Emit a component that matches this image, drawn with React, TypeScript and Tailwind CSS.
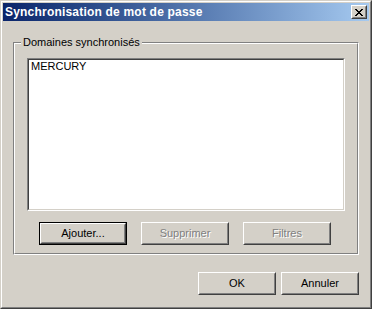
import React from 'react';

const font = "font-['Tahoma','Liberation_Sans',sans-serif]";

// classic 3D push button
const Btn = ({ label, w, disabled, focus }: { label: string; w: string; disabled?: boolean; focus?: boolean }) => {
  const face = (
    <div className="h-full border border-t-white border-l-white border-r-[#404040] border-b-[#404040]">
      <div className="h-full flex items-center justify-center border border-t-[#D4D0C8] border-l-[#D4D0C8] border-r-[#808080] border-b-[#808080]">
        <span
          className={disabled ? 'text-[#808080] [text-shadow:1px_1px_0_#ffffff]' : 'text-black'}
        >
          {label}
        </span>
      </div>
    </div>
  );
  return (
    <div className={`${w} h-[23px] ${focus ? 'border border-black' : ''}`}>
      {face}
    </div>
  );
};

const App = () => {
  return (
    <div className={`w-[372px] h-[309px] bg-[#D4D0C8] text-[11px] leading-none ${font}`}>
      <div className="h-full border border-t-[#D4D0C8] border-l-[#D4D0C8] border-r-[#404040] border-b-[#404040]">
        <div className="h-full flex flex-col p-[1px] border border-t-white border-l-white border-r-[#808080] border-b-[#808080]">
          {/* title bar */}
          <div className="h-[18px] flex items-center justify-between pl-[2px] pr-[2px] bg-gradient-to-r from-[#0A246A] to-[#A6CAF0]">
            <span className="text-white font-bold text-[12px] tracking-[0.2px]">Synchronisation de mot de passe</span>
            <div className="w-[16px] h-[14px] border border-t-white border-l-white border-r-[#404040] border-b-[#404040] bg-[#D4D0C8]">
              <div className="w-full h-full flex items-center justify-center border border-t-[#D4D0C8] border-l-[#D4D0C8] border-r-[#808080] border-b-[#808080]">
                <svg width="8" height="7" viewBox="0 0 8 7" shapeRendering="crispEdges">
                  <path
                    fill="#000"
                    d="M0 0h2v1H0zM6 0h2v1H6zM1 1h2v1H1zM5 1h2v1H5zM2 2h4v1H2zM3 3h2v1H3zM2 4h4v1H2zM1 5h2v1H1zM5 5h2v1H5zM0 6h2v1H0zM6 6h2v1H6z"
                  />
                </svg>
              </div>
            </div>
          </div>

          {/* client area */}
          <div className="flex-1 flex flex-col px-[10px] pt-[21px]">
            {/* group box */}
            <div className="relative h-[213px] border border-t-[#808080] border-l-[#808080] border-r-white border-b-white">
              <div className="h-full flex flex-col border border-t-white border-l-white border-r-[#808080] border-b-[#808080] px-[12px] pt-[14px]">
                <div className="h-[153px] border border-t-[#808080] border-l-[#808080] border-r-white border-b-white">
                  <div className="h-full bg-white border border-t-[#404040] border-l-[#404040] border-r-[#D4D0C8] border-b-[#D4D0C8] px-[2px] pt-[1px]">
                    <span className="text-black">MERCURY</span>
                  </div>
                </div>
                <div className="flex gap-[14px] pl-[12px] mt-[11px]">
                  <Btn label="Ajouter..." w="w-[88px]" focus />
                  <Btn label="Supprimer" w="w-[88px]" disabled />
                  <Btn label="Filtres" w="w-[88px]" disabled />
                </div>
              </div>
              <span className="absolute left-[7px] top-[-6px] px-[2px] bg-[#D4D0C8] text-black">
                Domaines synchronisés
              </span>
            </div>

            {/* OK / Annuler */}
            <div className="flex justify-end gap-[5px] mt-[17px]">
              <Btn label="OK" w="w-[78px]" />
              <Btn label="Annuler" w="w-[78px]" />
            </div>
          </div>
        </div>
      </div>
    </div>
  );
};

export default App;
